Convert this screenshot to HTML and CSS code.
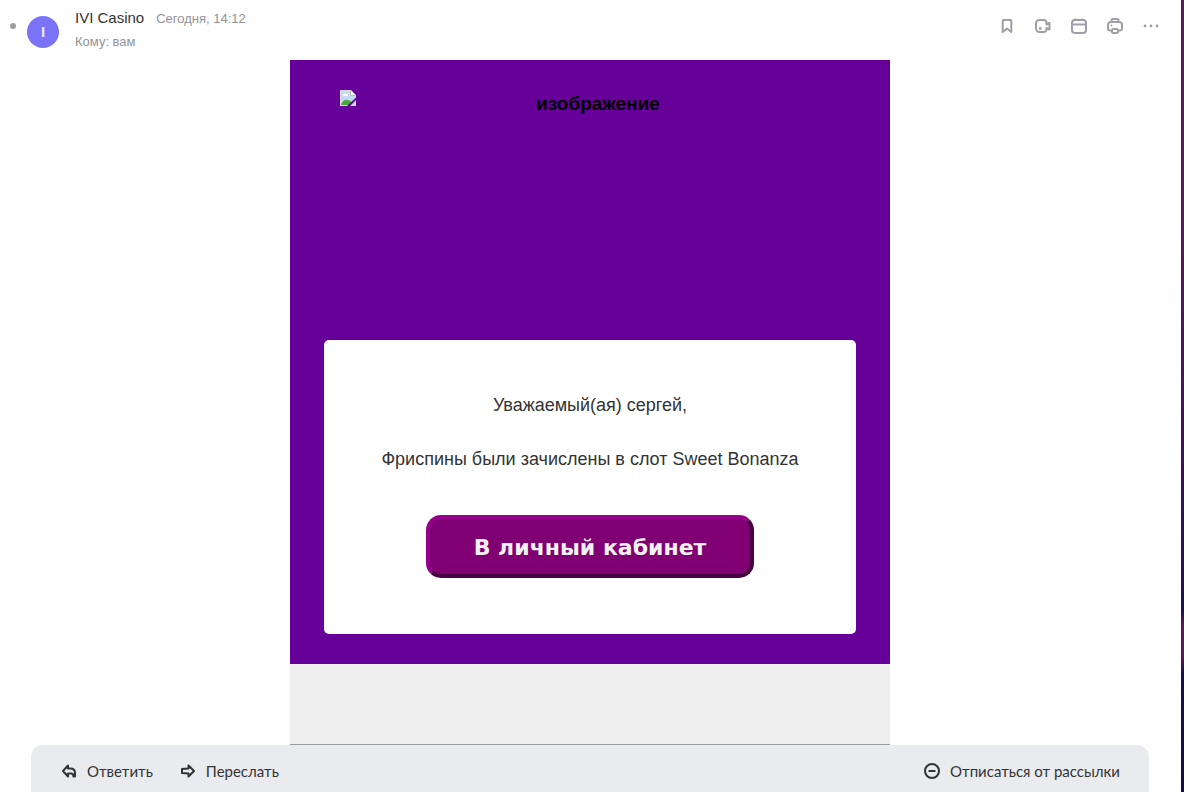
FILE: index.html
```html
<!DOCTYPE html>
<html lang="ru">
<head>
    <meta charset="UTF-8">
    <meta name="viewport" content="width=device-width, initial-scale=1.0">
    <title>IVI Casino</title>
    <link rel="stylesheet" href="styles.css">
</head>
<body>
    <div class="mail">
        <!-- Letter header -->
        <header class="letter-header">
            <span class="status-dot"></span>
            <div class="avatar">I</div>
            <div class="author">
                <div class="author-line">
                    <span class="sender">IVI Casino</span>
                    <span class="date">Сегодня, 14:12</span>
                </div>
                <div class="recipient">Кому: вам</div>
            </div>
            <div class="actions">
                <button type="button" aria-label="Закладка">
                    <svg viewBox="0 0 20 20"><path d="M6.500 4h7a.8.8 0 0 1 .8.800v11.200L10 12.500 5.700 16V4.800a.8.8 0 0 1 .8-.8z"/></svg>
                </button>
                <button type="button" aria-label="Видеозвонок">
                    <svg viewBox="0 0 20 20"><path d="M6.500 4h4a3 3 0 0 1 3 3v1.500l3-1.500v6.500l-3-1.500v1a3 3 0 0 1-3 3h-4a3.500 3.500 0 0 1-3.500-3.500v-5A3.500 3.500 0 0 1 6.500 4z"/><circle class="fill" cx="7.200" cy="12.500" r="1.400"/></svg>
                </button>
                <button type="button" aria-label="Календарь">
                    <svg viewBox="0 0 20 20"><rect x="3" y="4" width="14" height="13" rx="3"/><path d="M3 8.500h14M6.500 2.500v2.500M13.500 2.500v2.500"/></svg>
                </button>
                <button type="button" aria-label="Печать">
                    <svg viewBox="0 0 20 20"><path d="M6.500 6V4.500A1.500 1.500 0 0 1 8 3h4a1.500 1.500 0 0 1 1.500 1.500V6M6 14.500H5a2 2 0 0 1-2-2V9A3 3 0 0 1 6 6h8a3 3 0 0 1 3 3v3.500a2 2 0 0 1-2 2h-1"/><rect x="7" y="13" width="6" height="4" rx="1.500"/><circle class="fill" cx="6.500" cy="9.500" r="1"/></svg>
                </button>
                <button type="button" aria-label="Ещё">
                    <svg viewBox="0 0 20 20"><circle class="fill" cx="4" cy="10" r="1.400"/><circle class="fill" cx="10" cy="10" r="1.400"/><circle class="fill" cx="16" cy="10" r="1.400"/></svg>
                </button>
            </div>
        </header>

        <!-- Letter body -->
        <main class="letter">
            <section class="promo">
                <div class="banner">
                    <svg class="broken-image" viewBox="0 0 16 16">
                        <path fill="#c3d9f7" d="M0 0h11l5 5v11H0z"/>
                        <path fill="#fff" d="M3 6a2 2 0 0 1 3-2 1.500 1.500 0 0 1 2 2z"/>
                        <path fill="#46a83a" d="M1 15c1-4 4-6 7-5l3 1v4z"/>
                        <path fill="none" stroke="#dcdcdc" stroke-width="1" d="M.5.5h10l5 5v10H.5z"/>
                        <path fill="#fff" stroke="#c0c0c0" stroke-width="1" d="M10.500.5v5h5"/>
                        <path fill="#609" d="M16 7.500v2.500l-6 6H7z"/>
                    </svg>
                    <span class="banner-text">изображение</span>
                </div>
                <div class="card">
                    <p>Уважаемый(ая) сергей,</p>
                    <p>Фриспины были зачислены в слот Sweet Bonanza</p>
                    <a href="#" class="cabinet-link">В личный кабинет</a>
                </div>
            </section>
            <div class="letter-bottom"></div>
        </main>

        <!-- Reply bar -->
        <footer class="reply-bar">
            <button type="button">
                <svg viewBox="0 0 16 16"><path d="M7 2.500 2 8 7 13.500V10.500h3q2.500 0 2.500 3H14V10q0-4.500-4.500-4.500H7z"/></svg>
                Ответить
            </button>
            <button type="button">
                <svg viewBox="0 0 16 16"><path d="M8.500 2.500 14 8l-5.500 5.500v-3L2 10V6l6.500-.5z"/></svg>
                Переслать
            </button>
            <button type="button" class="unsubscribe">
                <svg viewBox="0 0 16 16"><circle cx="8" cy="8" r="7"/><path d="M4.500 8h7"/></svg>
                Отписаться от рассылки
            </button>
        </footer>
    </div>
    <div class="wallpaper"></div>
</body>
</html>
```
FILE: styles.css
```css
* {
    box-sizing: border-box;
}
body {
    display: flex;
    height: 100vh;
    margin: 0;
    overflow: hidden;
    background: #fff;
    font-family: "Liberation Sans", Arial, sans-serif;
    color: #333;
}
button {
    padding: 0;
    border: 0;
    background: none;
    font: inherit;
    color: inherit;
    cursor: pointer;
}
svg {
    display: block;
    fill: none;
    stroke: currentColor;
    stroke-width: 2;
    stroke-linejoin: round;
}
.fill {
    fill: currentColor;
    stroke: none;
}
.mail {
    display: flex;
    flex: 1;
    flex-direction: column;
    padding-right: 1px;
}

/* Header */
.letter-header {
    display: flex;
    align-items: flex-start;
    height: 60px;
    padding: 8px 19px 0 10px;
}
.status-dot {
    width: 6px;
    height: 6px;
    margin-top: 15px;
    border-radius: 50%;
    background: #9d9fa3;
}
.avatar {
    width: 32px;
    height: 32px;
    margin: 8px 16px 0 11px;
    border-radius: 50%;
    background: #7a73f7;
    color: #e8e6ff;
    font-size: 15px;
    font-weight: bold;
    line-height: 32px;
    text-align: center;
}
.author-line {
    display: flex;
    align-items: baseline;
    gap: 12px;
    line-height: 20px;
}
.sender {
    font-size: 15px;
}
.date,
.recipient {
    color: #919399;
    font-size: 13px;
}
.recipient {
    margin-top: 3px;
    line-height: 20px;
}
.actions {
    display: flex;
    gap: 16px;
    margin: 8px 0 0 auto;
    color: #9fa0a7;
}
.actions svg {
    width: 20px;
    height: 20px;
}

/* Letter */
.letter {
    width: 600px;
    margin: 0 auto;
    flex: 1;
    display: flex;
    flex-direction: column;
}
.promo {
    padding: 30px 34px;
    background: #609;
}
.banner {
    display: flex;
    height: 250px;
    padding: 0 16px;
}
.broken-image {
    width: 16px;
    height: 16px;
    stroke: none;
}
.banner-text {
    flex: 1;
    color: #000;
    font-size: 19px;
    font-weight: bold;
    line-height: 27px;
    text-align: center;
}
.card {
    display: flex;
    flex-direction: column;
    align-items: center;
    padding: 52px 20px 56px;
    border-radius: 5px;
    background: #fff;
}
.card p {
    margin: 0 0 27px;
    font-size: 18px;
    line-height: 27px;
}
.cabinet-link {
    margin-top: 15px;
    padding: 14px 44px 12px;
    border: 4px solid;
    border-color: #94008a #46003f #46003f #94008a;
    border-radius: 15px;
    background: #800073;
    color: #f2f2f2;
    font-family: "DejaVu Sans", Verdana, sans-serif;
    font-size: 22px;
    font-weight: bold;
    line-height: 29px;
    text-decoration: none;
}
.letter-bottom {
    flex: 1;
    border-bottom: 1px solid #999;
    background: #efefef;
}

/* Reply bar */
.reply-bar {
    display: flex;
    gap: 27px;
    margin: 0 31px;
    padding: 16px 29px 11px 30px;
    border-radius: 12px 12px 0 0;
    background: #eaebef;
    font-family: Lato, "Open Sans", sans-serif;
    font-size: 15px;
    line-height: 20px;
}
.reply-bar button {
    display: flex;
    align-items: center;
    gap: 10px;
}
.reply-bar svg {
    width: 16px;
    height: 16px;
}
.reply-bar .unsubscribe {
    margin-left: auto;
}

/* Desktop strip at the window edge */
.wallpaper {
    width: 3px;
    background: linear-gradient(#5c1a5e 0, #5c1a5e 25%, #45155a 50%, #2a1050 72%, #1c1048 77%, #5f1a55 79%, #5a1a50 83%, #1a1048 85%, #140c48 100%);
}
```
